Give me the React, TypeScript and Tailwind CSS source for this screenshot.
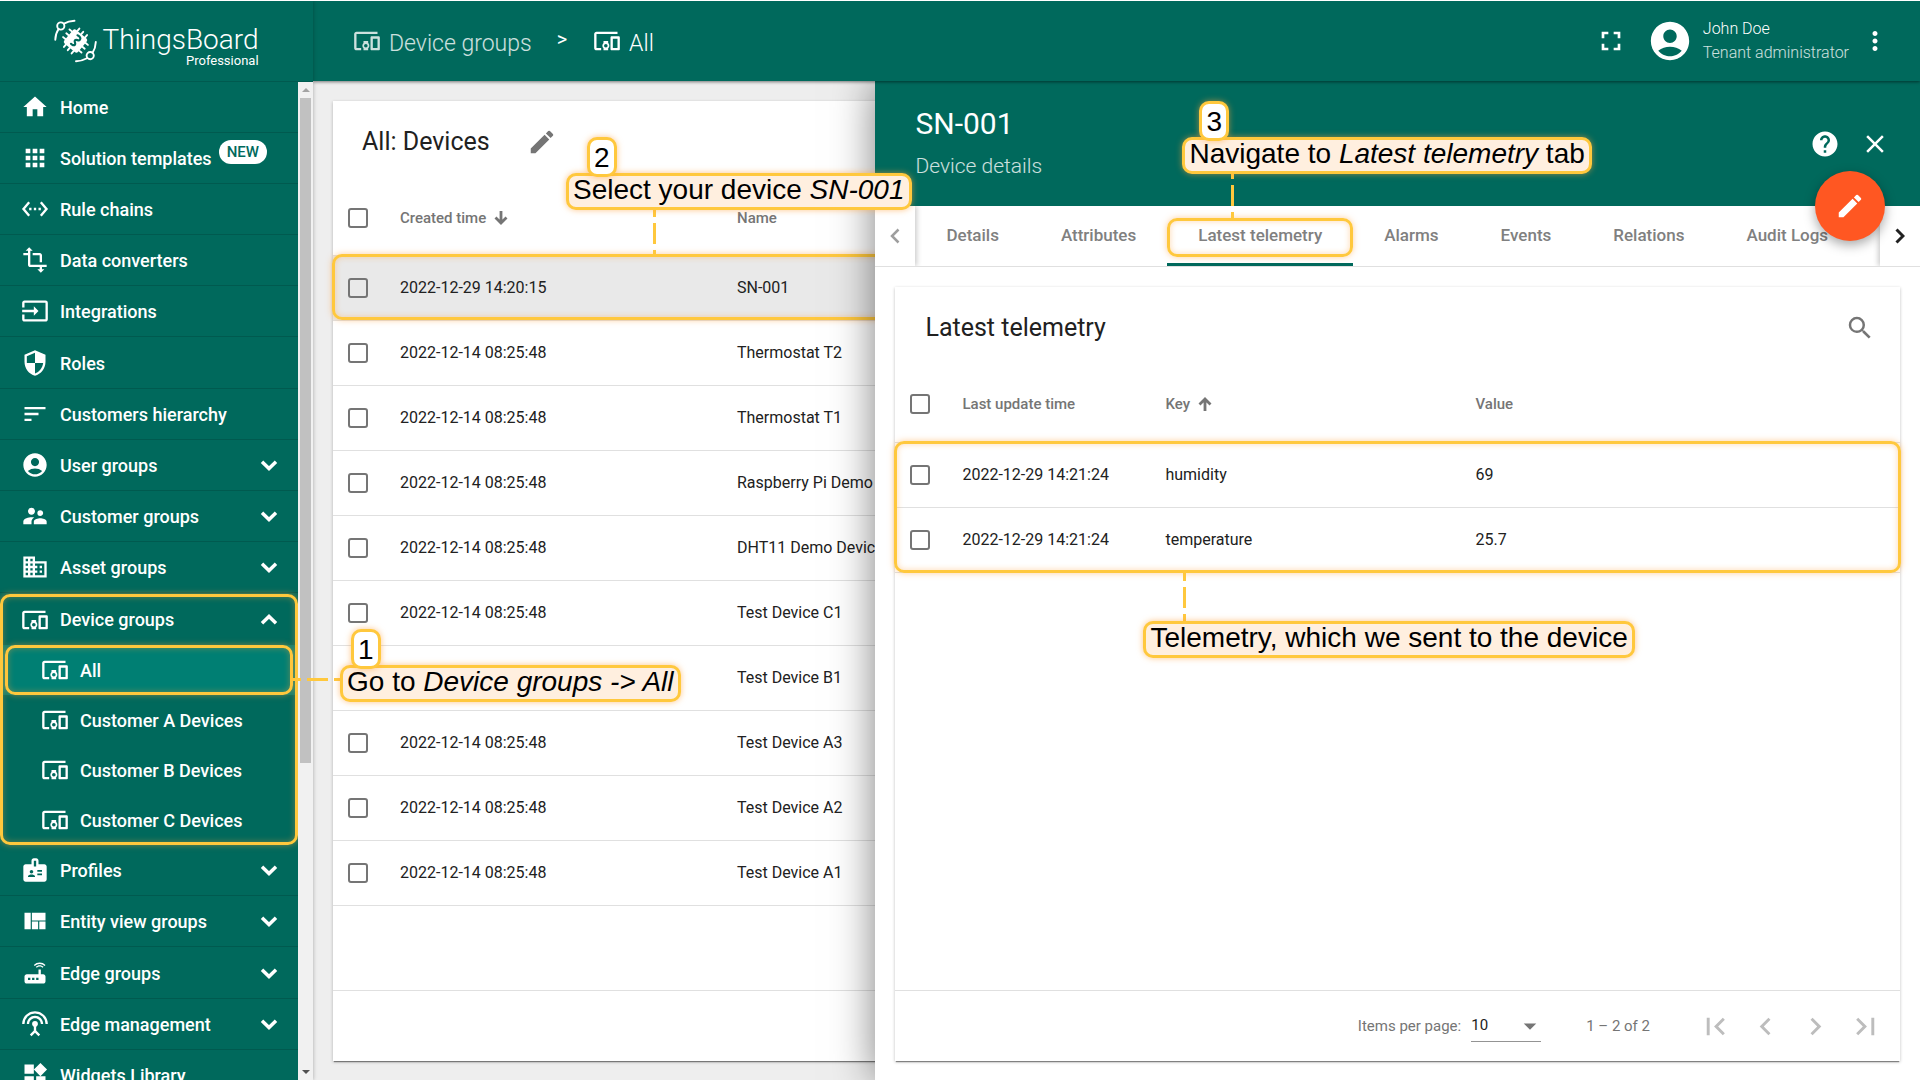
import type { ReactNode } from "react";
import type { IconType } from "react-icons";
import {
  MdAccountCircle,
  MdApps,
  MdArrowDropDown,
  MdBadge,
  MdChevronLeft,
  MdChevronRight,
  MdClose,
  MdDevicesOther,
  MdDomain,
  MdEdit,
  MdFirstPage,
  MdFullscreen,
  MdHelp,
  MdHome,
  MdInput,
  MdLastPage,
  MdMoreVert,
  MdRouter,
  MdSearch,
  MdSecurity,
  MdSettingsEthernet,
  MdSettingsInputAntenna,
  MdSort,
  MdSupervisorAccount,
  MdTransform,
  MdViewQuilt,
  MdWidgets,
} from "react-icons/md";

type MenuItem = {
  label: string;
  icon: IconType;
  badge?: string;
  expandable?: boolean;
  children?: string[];
};

const menuSections: MenuItem[][] = [
  [
    { label: "Home", icon: MdHome },
    { label: "Solution templates", icon: MdApps, badge: "NEW" },
    { label: "Rule chains", icon: MdSettingsEthernet },
    { label: "Data converters", icon: MdTransform },
    { label: "Integrations", icon: MdInput },
  ],
  [
    { label: "Roles", icon: MdSecurity },
    { label: "Customers hierarchy", icon: MdSort },
    { label: "User groups", icon: MdAccountCircle, expandable: true },
    { label: "Customer groups", icon: MdSupervisorAccount, expandable: true },
    { label: "Asset groups", icon: MdDomain, expandable: true },
  ],
  [
    {
      label: "Device groups",
      icon: MdDevicesOther,
      expandable: true,
      children: [
        "All",
        "Customer A Devices",
        "Customer B Devices",
        "Customer C Devices",
      ],
    },
    { label: "Profiles", icon: MdBadge, expandable: true },
    { label: "Entity view groups", icon: MdViewQuilt, expandable: true },
  ],
  [
    { label: "Edge groups", icon: MdRouter, expandable: true },
    { label: "Edge management", icon: MdSettingsInputAntenna, expandable: true },
    { label: "Widgets Library", icon: MdWidgets },
  ],
];

const devices = [
  { time: "2022-12-29 14:20:15", name: "SN-001" },
  { time: "2022-12-14 08:25:48", name: "Thermostat T2" },
  { time: "2022-12-14 08:25:48", name: "Thermostat T1" },
  { time: "2022-12-14 08:25:48", name: "Raspberry Pi Demo Device" },
  { time: "2022-12-14 08:25:48", name: "DHT11 Demo Device" },
  { time: "2022-12-14 08:25:48", name: "Test Device C1" },
  { time: "2022-12-14 08:25:48", name: "Test Device B1" },
  { time: "2022-12-14 08:25:48", name: "Test Device A3" },
  { time: "2022-12-14 08:25:48", name: "Test Device A2" },
  { time: "2022-12-14 08:25:48", name: "Test Device A1" },
];

const telemetry = [
  { time: "2022-12-29 14:21:24", key: "humidity", value: "69" },
  { time: "2022-12-29 14:21:24", key: "temperature", value: "25.7" },
];

const tabs = [
  "Details",
  "Attributes",
  "Latest telemetry",
  "Alarms",
  "Events",
  "Relations",
  "Audit Logs",
];

const Logo = () => (
  <svg
    className="size-11 shrink-0"
    viewBox="0 0 44 44"
    fill="none"
    stroke="white"
    strokeWidth="1.9"
    strokeLinecap="round"
  >
    <circle cx="6.8" cy="7" r="3.6" />
    <path d="M10 4.6C13 2.8 16 2 20.5 1.8M4.6 10C2.4 13.2 1.4 16.5 1.3 20.8" />
    <circle cx="36.2" cy="36.6" r="3.6" />
    <path d="M33 39.2C29.5 41.2 26.5 42 22 42.2M38.6 33.8C40.7 30.5 41.6 27.5 41.8 23" />
    <g transform="rotate(40 21.5 22)">
      <rect x="12.5" y="13" width="18" height="18" rx="2.5" fill="white" stroke="none" />
      <path d="M16.5 13v-3M21.5 13v-3M26.5 13v-3M16.5 31v3M21.5 31v3M26.5 31v3M12.5 17h-3M12.5 22h-3M12.5 27h-3M30.5 17h3M30.5 22h3M30.5 27h3" />
    </g>
    <path
      d="M23.5 16.3c2.6 1.2 3.6 3 2.3 4.6c-1.2 1.5-3.4-.9-4.8.4c-1.3 1.3 1.2 2.9-.1 4.4c-1 1.1-2.7.3-3.9-.9"
      stroke="#00695c"
      strokeWidth="2.2"
    />
  </svg>
);

const Chevron = ({ up = false }: { up?: boolean }) => (
  <svg className="size-5" viewBox="0 0 20 20" fill="none" stroke="currentColor" strokeWidth="3.5">
    <path d={up ? "M3 13.2l7-6.7l7 6.7" : "M3 6.8l7 6.7l7-6.7"} />
  </svg>
);

const SortArrow = ({ up = false }: { up?: boolean }) => (
  <svg className="size-3.5" viewBox="0 0 14 14" fill="none" stroke="#757575" strokeWidth="2.8">
    <path d={up ? "M7 14V2M1.5 7.5L7 2l5.5 5.5" : "M7 0v12M1.5 6.5L7 12l5.5-5.5"} />
  </svg>
);

const Checkbox = ({ label }: { label: string }) => (
  <input
    type="checkbox"
    aria-label={label}
    className="block size-5 appearance-none rounded-[3px] border-2 border-[#757575] checked:bg-[#00695c]"
  />
);

const Highlight = ({ className }: { className: string }) => (
  <div
    className={`pointer-events-none absolute rounded-[10px] border-3 border-[#ffc83d] shadow-[0_0_6px_rgba(255,160,60,0.5),inset_0_0_6px_rgba(255,160,60,0.4)] ${className}`}
  />
);

const VerticalDash = ({ className }: { className: string }) => (
  <div
    className={`pointer-events-none absolute w-[3px] bg-[repeating-linear-gradient(to_bottom,#ffc83d_0_8px,transparent_8px_14px,#ffc83d_14px_27px)] ${className}`}
  />
);

const Hint = ({
  step,
  stepClassName = "",
  className,
  children,
}: {
  step?: string;
  stepClassName?: string;
  className: string;
  children: ReactNode;
}) => (
  <div
    className={`pointer-events-none absolute z-30 font-['Liberation_Sans',Arial,sans-serif] text-[28px] leading-7 whitespace-nowrap text-black ${className}`}
  >
    <div className="rounded-[10px] border-3 border-[#ffc83d] bg-[#ffefdf] px-1 pb-[3px] shadow-[0_0_6px_rgba(255,160,60,0.6)]">
      {children}
    </div>
    {step && (
      <div
        className={`absolute bottom-full -mb-1 rounded-[10px] border-3 border-[#ffc83d] bg-white px-1 pt-1 pb-0.5 shadow-[0_0_6px_rgba(255,160,60,0.6)] ${stepClassName}`}
      >
        {step}
      </div>
    )}
  </div>
);

const SideMenu = () => (
  <aside className="relative z-20 flex w-[313px] shrink-0 flex-col bg-[#00695c] text-white shadow-[0_0_4px_rgba(0,0,0,0.3)]">
    <div className="flex h-[81px] shrink-0 items-center justify-center gap-1 border-b border-[#005a4f]">
      <Logo />
      <div className="flex flex-col items-end pt-3">
        <span className="text-[28px] leading-7 font-light">ThingsBoard</span>
        <span className="text-[13px] leading-3.5">Professional</span>
      </div>
    </div>
    <div className="flex min-h-0 flex-1">
      <nav className="min-w-0 flex-1 overflow-hidden text-[18px] font-medium">
        {menuSections.map((section, i) => (
          <div key={i} className="pb-px">
            {section.map((item) => (
              <div key={item.label} className="relative">
                <a
                  href="#"
                  className={`flex h-[51px] items-center gap-[11px] pr-[19px] pl-[21px] ${
                    item.children ? "" : "border-b border-[#005a4f]"
                  }`}
                >
                  <item.icon className="size-7 shrink-0" />
                  <span>{item.label}</span>
                  {item.badge && (
                    <span className="-ml-1 mb-3 rounded-full bg-white px-2 text-[15px] leading-6 text-[#00695c]">
                      {item.badge}
                    </span>
                  )}
                  {item.expandable && (
                    <span className="ml-auto">
                      <Chevron up={!!item.children} />
                    </span>
                  )}
                </a>
                {item.children?.map((child, index) => (
                  <a
                    key={child}
                    href="#"
                    className={`relative flex h-[50px] items-center gap-[11px] pl-[41px] ${
                      index === 0 ? "bg-[#007f73]" : ""
                    }`}
                  >
                    <MdDevicesOther className="size-7" />
                    <span>{child}</span>
                    {index === 0 && <Highlight className="inset-x-[5px] inset-y-0" />}
                  </a>
                ))}
                {item.children && <Highlight className="inset-0" />}
              </div>
            ))}
          </div>
        ))}
      </nav>
      <div className="flex w-[15px] shrink-0 flex-col items-center bg-[#f1f1f1]">
        <div className="flex h-4 items-center">
          <svg className="h-1 w-2" viewBox="0 0 8 4">
            <path d="M0 4l4-4l4 4z" fill="#a3a3a3" />
          </svg>
        </div>
        <div className="h-2/3 w-[11px] bg-[#c1c1c1]" />
        <div className="mt-auto flex h-4 items-center">
          <svg className="h-1 w-2" viewBox="0 0 8 4">
            <path d="M0 0l4 4l4-4z" fill="#505050" />
          </svg>
        </div>
      </div>
    </div>
  </aside>
);

const Header = () => (
  <header className="relative z-10 flex h-20 shrink-0 items-center bg-[#00695c] pr-[30px] pl-10 text-white shadow-[0_1px_3px_rgba(0,0,0,0.5)]">
    <a href="#" className="flex items-center gap-2 text-[23px] font-light text-white/80">
      <MdDevicesOther className="size-7" />
      <span className="pt-1.5">Device groups</span>
    </a>
    <span className="mr-[26px] mb-1 ml-[25px] text-xl">&gt;</span>
    <a href="#" className="flex items-center gap-2 text-[23px] font-light">
      <MdDevicesOther className="size-7" />
      <span className="pt-1.5">All</span>
    </a>
    <button aria-label="Fullscreen" className="mr-5 ml-auto">
      <MdFullscreen className="size-8" />
    </button>
    <MdAccountCircle className="size-[46px]" />
    <div className="ml-2.5 text-base leading-6 font-light">
      <p>John Doe</p>
      <p className="text-white/80">Tenant administrator</p>
    </div>
    <button aria-label="User menu" className="ml-[11px]">
      <MdMoreVert className="size-[30px]" />
    </button>
  </header>
);

const DevicesCard = () => (
  <section className="flex flex-1 flex-col bg-white shadow-[0_2px_1px_-1px_rgba(0,0,0,0.4),0_1px_3px_rgba(0,0,0,0.25)]">
    <div className="flex h-20 shrink-0 items-center gap-[37px] px-[29px] pt-0.5">
      <h1 className="text-[25px]">All: Devices</h1>
      <button aria-label="Edit device group">
        <MdEdit className="size-[30px] text-[#757575]" />
      </button>
    </div>
    <table className="w-full table-fixed text-left text-base">
      <thead>
        <tr className="h-[74px] border-b border-[#e0e0e0] text-[15px] text-[#757575]">
          <th className="w-[67px] pl-[15px]">
            <Checkbox label="Select all devices" />
          </th>
          <th className="w-[337px] font-medium">
            <span className="flex items-center gap-2">
              Created time <SortArrow />
            </span>
          </th>
          <th className="font-medium">Name</th>
        </tr>
      </thead>
      <tbody>
        {devices.map((device, index) => (
          <tr
            key={index}
            className={`relative h-[65px] border-b border-[#e0e0e0] ${
              index === 0 ? "bg-[#e9e9e9]" : ""
            }`}
          >
            <td className="pl-[15px]">
              <Checkbox label={`Select ${device.name}`} />
              {index === 0 && <Highlight className="-inset-px" />}
            </td>
            <td>{device.time}</td>
            <td>{device.name}</td>
          </tr>
        ))}
      </tbody>
    </table>
    <div className="mt-auto h-[71px] border-t border-[#e0e0e0]" />
  </section>
);

const TelemetryCard = () => (
  <section className="mx-5 mt-5 mb-[19px] flex flex-1 flex-col bg-white shadow-[0_2px_1px_-1px_rgba(0,0,0,0.4),0_1px_3px_rgba(0,0,0,0.25)]">
    <div className="flex h-20 shrink-0 items-center justify-between pt-0.5 pr-[25px] pl-[30px]">
      <h3 className="text-[25px]">Latest telemetry</h3>
      <button aria-label="Search">
        <MdSearch className="size-[30px] text-[#757575]" />
      </button>
    </div>
    <div className="relative">
      <table className="w-full table-fixed text-left text-base">
        <thead>
          <tr className="h-[75px] border-b border-[#e0e0e0] text-[15px] text-[#757575]">
            <th className="w-[67px] pl-[15px]">
              <Checkbox label="Select all telemetry" />
            </th>
            <th className="w-[203px] font-medium">Last update time</th>
            <th className="w-[310px] font-medium">
              <span className="flex items-center gap-2">
                Key <SortArrow up />
              </span>
            </th>
            <th className="font-medium">Value</th>
          </tr>
        </thead>
        <tbody>
          {telemetry.map((row) => (
            <tr key={row.key} className="h-[65px] border-b border-[#e0e0e0]">
              <td className="pl-[15px]">
                <Checkbox label={`Select ${row.key}`} />
              </td>
              <td>{row.time}</td>
              <td>{row.key}</td>
              <td>{row.value}</td>
            </tr>
          ))}
        </tbody>
      </table>
      <Highlight className="-inset-x-px top-[74px] bottom-0" />
      <VerticalDash className="top-full left-[288px] h-12" />
      <Hint className="top-full left-[248px] mt-12">
        Telemetry, which we sent to the device
      </Hint>
    </div>
    <footer className="mt-auto flex h-[71px] items-center justify-end border-t border-[#e0e0e0] pr-[17px] text-[15px] text-[#757575]">
      <label htmlFor="page-size">Items per page:</label>
      <div className="relative ml-2.5 flex items-center border-b border-[#949494]">
        <select
          id="page-size"
          defaultValue="10"
          className="h-[30px] w-[70px] appearance-none text-[#212121]"
        >
          <option>10</option>
          <option>20</option>
          <option>30</option>
        </select>
        <MdArrowDropDown className="pointer-events-none absolute -right-1 size-[30px]" />
      </div>
      <span className="mr-12 ml-[45px]">1 – 2 of 2</span>
      <div className="flex gap-[15px] text-[#bdbdbd]">
        <button aria-label="First page">
          <MdFirstPage className="size-[35px]" />
        </button>
        <button aria-label="Previous page">
          <MdChevronLeft className="size-[35px]" />
        </button>
        <button aria-label="Next page">
          <MdChevronRight className="size-[35px]" />
        </button>
        <button aria-label="Last page">
          <MdLastPage className="size-[35px]" />
        </button>
      </div>
    </footer>
  </section>
);

const DetailsPanel = () => (
  <aside className="absolute inset-y-0 right-0 flex w-[65%] flex-col bg-white shadow-[0_0_40px_rgba(0,0,0,0.5)]">
    <div className="relative flex h-[125px] shrink-0 items-center justify-between bg-[#00695c] pr-[30px] pl-10 text-white">
      <div className="pt-0.5">
        <h2 className="text-[30px] leading-10">SN-001</h2>
        <p className="pt-0.5 text-[21px] leading-10 font-light text-white/80">Device details</p>
      </div>
      <div className="flex gap-5">
        <button aria-label="Help">
          <MdHelp className="size-[30px]" />
        </button>
        <button aria-label="Close">
          <MdClose className="size-[30px]" />
        </button>
      </div>
      <button
        aria-label="Edit device"
        className="absolute right-[35px] -bottom-[35px] z-20 flex size-[70px] items-center justify-center rounded-full bg-[#ff5722] shadow-[0_4px_12px_rgba(0,0,0,0.35)]"
      >
        <MdEdit className="size-[30px]" />
      </button>
      <Hint step="3" stepClassName="left-[17px]" className="top-[56px] left-[307px]">
        Navigate to <i>Latest telemetry</i> tab
      </Hint>
      <VerticalDash className="top-[90px] left-[356px] z-10 h-[47px]" />
    </div>
    <div className="flex h-[61px] shrink-0 overflow-hidden border-b border-[#e0e0e0]">
      <button
        aria-label="Scroll tabs left"
        className="z-10 flex w-10 shrink-0 items-center justify-center shadow-[2px_0_5px_rgba(0,0,0,0.2)]"
      >
        <svg className="h-4 w-2.5" viewBox="0 0 10 16" fill="none" stroke="#9e9e9e" strokeWidth="2.5">
          <path d="M8.5 1.5L2 8l6.5 6.5" />
        </svg>
      </button>
      <div role="tablist" className="flex min-w-0 flex-1 overflow-hidden">
        {tabs.map((tab) => (
          <button
            key={tab}
            role="tab"
            aria-selected={tab === "Latest telemetry"}
            className={`relative shrink-0 border-b-3 px-[31px] pt-0.5 text-[17px] font-medium text-[#808080] ${
              tab === "Latest telemetry" ? "border-[#00695c]" : "border-transparent"
            }`}
          >
            {tab}
            {tab === "Latest telemetry" && <Highlight className="inset-x-0 top-3 bottom-1.5" />}
          </button>
        ))}
      </div>
      <button
        aria-label="Scroll tabs right"
        className="z-10 flex w-10 shrink-0 items-center justify-center shadow-[-2px_0_5px_rgba(0,0,0,0.2)]"
      >
        <svg className="h-4 w-2.5" viewBox="0 0 10 16" fill="none" stroke="#212121" strokeWidth="3">
          <path d="M1.5 1.5L8 8l-6.5 6.5" />
        </svg>
      </button>
    </div>
    <TelemetryCard />
  </aside>
);

export default function App() {
  return (
    <div className="relative flex h-screen overflow-hidden border-t border-white bg-[#eeeeee] font-[Roboto,sans-serif] text-[#212121]">
      <SideMenu />
      <div className="flex min-w-0 flex-1 flex-col">
        <Header />
        <main className="relative flex min-h-0 flex-1 flex-col overflow-hidden px-5 pt-5 pb-[19px]">
          <DevicesCard />
          <DetailsPanel />
        </main>
      </div>
      <div className="absolute top-[677px] left-[293px] z-20 h-[3px] w-12 bg-[repeating-linear-gradient(to_right,#ffc83d_0_8px,transparent_8px_14px,#ffc83d_14px_27px)]" />
      <Hint step="1" stepClassName="left-[11px]" className="top-[664px] left-[340px]">
        Go to <i>Device groups -&gt; All</i>
      </Hint>
      <VerticalDash className="top-[208px] left-[653px] z-20 h-[47px]" />
      <Hint step="2" stepClassName="left-[21px]" className="top-[172px] left-[566px]">
        Select your device <i>SN-001</i>
      </Hint>
    </div>
  );
}
